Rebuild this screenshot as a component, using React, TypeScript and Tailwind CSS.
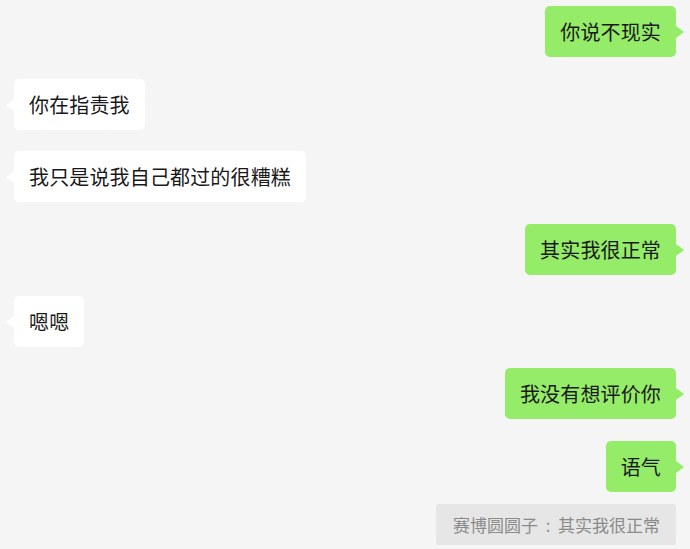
import React from "react";

type Msg = { text: string; me: boolean; mt: string };

const messages: Msg[] = [
  { text: "你说不现实", me: true, mt: "mt-[6px]" },
  { text: "你在指责我", me: false, mt: "mt-[22px]" },
  { text: "我只是说我自己都过的很糟糕", me: false, mt: "mt-[21px]" },
  { text: "其实我很正常", me: true, mt: "mt-[22px]" },
  { text: "嗯嗯", me: false, mt: "mt-[21px]" },
  { text: "我没有想评价你", me: true, mt: "mt-[21px]" },
  { text: "语气", me: true, mt: "mt-[22px]" },
];

function Bubble({ msg }: { msg: Msg }) {
  return (
    <div className={`flex ${msg.me ? "justify-end" : "justify-start"} ${msg.mt}`}>
      <div
        className={`relative rounded-[5px] px-[15px] py-[13px] text-[20px] leading-[25px] tracking-[0.15px] text-[#191919] ${
          msg.me ? "bg-[#95ec69]" : "bg-white"
        }`}
      >
        {msg.text}
        {msg.me ? (
          <span className="absolute top-1/2 -right-[8px] -translate-y-1/2 border-y-[6px] border-l-[8px] border-y-transparent border-l-[#95ec69]" />
        ) : (
          <span className="absolute top-1/2 -left-[8px] -translate-y-1/2 border-y-[6px] border-r-[8px] border-y-transparent border-r-white" />
        )}
      </div>
    </div>
  );
}

export default function App() {
  return (
    <div
      className="w-[690px] h-[549px] overflow-hidden bg-[#f5f5f5] px-[14px]"
      style={{ fontFamily: '"Noto Sans CJK SC", "Microsoft YaHei", sans-serif' }}
    >
      {messages.map((m, i) => (
        <Bubble key={i} msg={m} />
      ))}
      <div className="flex justify-end mt-[12px]">
        <div className="rounded-[3px] bg-[#e6e6e6] pl-[17px] pr-[16px] h-[41px] flex items-center text-[17px] text-[#8a8a8a]">
          赛博圆圆子
          <span className="inline-block w-[20px] text-center">:</span>
          其实我很正常
        </div>
      </div>
    </div>
  );
}
